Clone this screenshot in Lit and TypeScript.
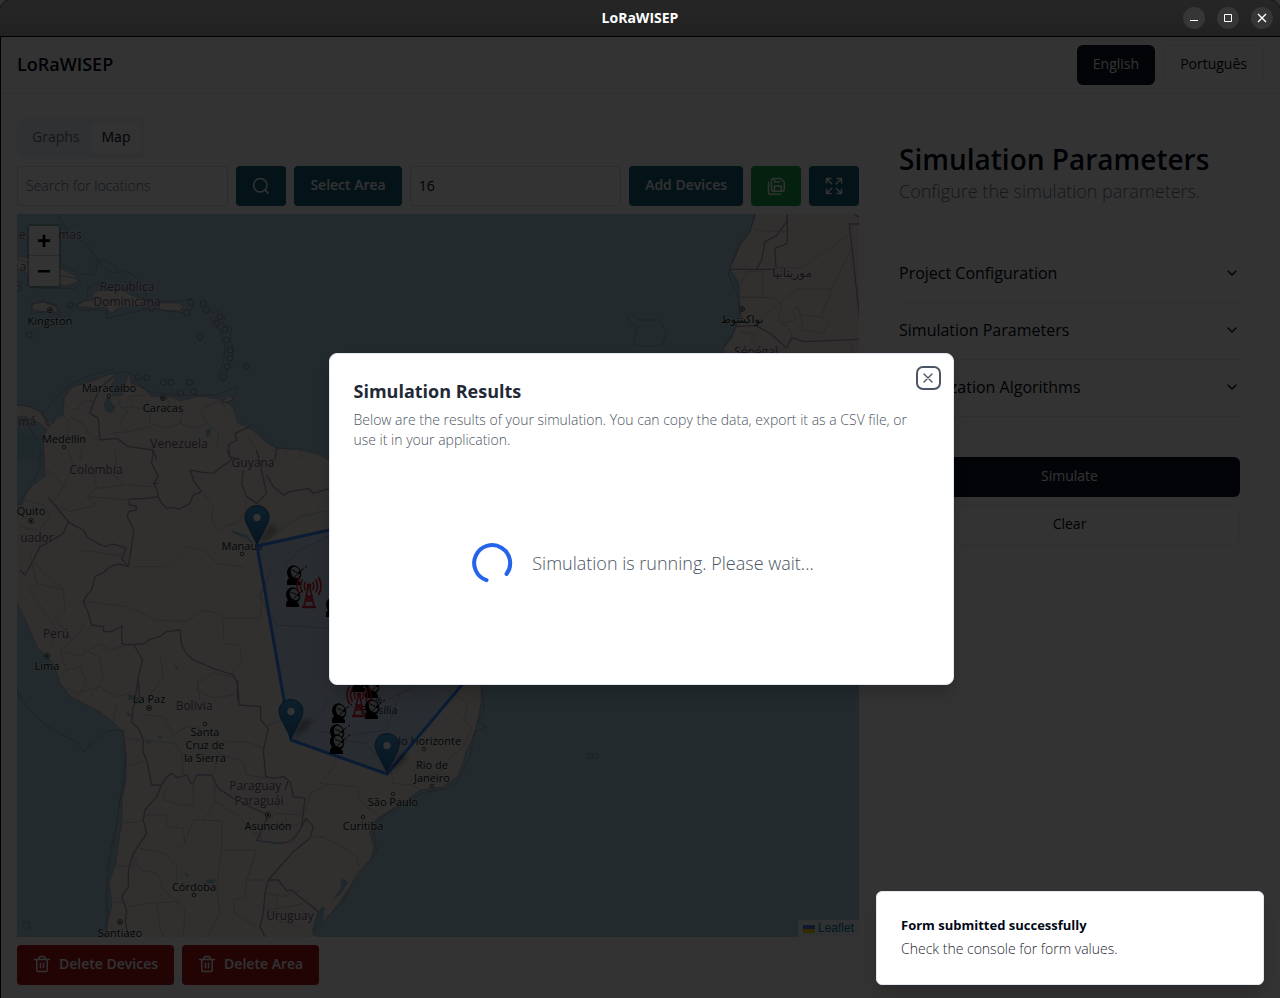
import { LitElement, html, css, svg } from "lit";
import { customElement, state } from "lit/decorators.js";

type Label = { t: string; x: number; y: number; dot?: [number, number]; capital?: boolean };

const COUNTRIES: Label[] = [
  { t: "República", x: 127, y: 291 },
  { t: "Dominicana", x: 127, y: 306 },
  { t: "Venezuela", x: 179, y: 448 },
  { t: "Colombia", x: 96, y: 474 },
  { t: "Guyana", x: 253, y: 467 },
  { t: "Perú", x: 56, y: 638 },
  { t: "Bolivia", x: 194, y: 710 },
  { t: "Paraguay /", x: 259, y: 790 },
  { t: "Paraguái", x: 259, y: 805 },
  { t: "Uruguay", x: 290, y: 920 },
  { t: "موريتانيا", x: 792, y: 277 },
  { t: "Sénégal", x: 756, y: 356 },
];

const EDGE_LABELS: Label[] = [
  { t: "e", x: 22, y: 239 },
  { t: "mas", x: 70, y: 239 },
  { t: "a", x: 23, y: 271 },
  { t: "má", x: 27, y: 426 },
  { t: "uador", x: 37, y: 542 },
];

const CITIES: Label[] = [
  { t: "Kingston", x: 50, y: 325, dot: [50, 310], capital: true },
  { t: "Maracaibo", x: 109, y: 392, dot: [109, 396] },
  { t: "Caracas", x: 163, y: 412, dot: [163, 398], capital: true },
  { t: "Medellín", x: 64, y: 443, dot: [64, 447] },
  { t: "Quito", x: 31, y: 515, dot: [31, 521], capital: true },
  { t: "Manaus", x: 242, y: 550, dot: [242, 554] },
  { t: "Lima", x: 47, y: 670, dot: [47, 656], capital: true },
  { t: "La Paz", x: 149, y: 703, dot: [149, 708], capital: true },
  { t: "Santa", x: 205, y: 736, dot: [205, 724] },
  { t: "Cruz de", x: 205, y: 749 },
  { t: "la Sierra", x: 205, y: 762 },
  { t: "Asunción", x: 268, y: 830, dot: [268, 815], capital: true },
  { t: "Córdoba", x: 194, y: 891, dot: [194, 895] },
  { t: "Santiago", x: 120, y: 937, dot: [120, 922], capital: true },
  { t: "Brasília", x: 379, y: 714, dot: [379, 700], capital: true },
  { t: "Belo Horizonte", x: 423, y: 745, dot: [424, 749] },
  { t: "Rio de", x: 432, y: 769 },
  { t: "Janeiro", x: 432, y: 782, dot: [432, 786] },
  { t: "São Paulo", x: 393, y: 806, dot: [393, 794] },
  { t: "Curitiba", x: 363, y: 830, dot: [363, 817] },
  { t: "نواكشوط", x: 742, y: 323, dot: [742, 309], capital: true },
];

const PINS: [number, number][] = [[257, 546], [291, 740], [387, 774]];
const DISHES: [number, number][] = [
  [295, 575], [294, 597], [334, 607],
  [360, 682], [373, 688], [373, 709], [340, 713], [338, 734], [338, 744],
];
const TOWERS: [number, number][] = [[309, 593], [359, 702]];

@customElement("map-view")
export class MapView extends LitElement {
  static styles = css`
    :host { display: block; position: relative; overflow: hidden; background: #aad3df; }
    .canvas { display: block; width: 100%; height: 100%; }
    .land { fill: #f2efe9; stroke: #a58fb0; stroke-width: 0.6; }
    .lake { fill: #9cc8d8; }
    .shelf { fill: none; stroke: #7fa9c0; stroke-width: 3; opacity: 0.5; }
    .sea-line { fill: none; stroke: #8f7f9f; stroke-width: 3; opacity: 0.6; }
    .border { fill: none; stroke: #b096b4; stroke-width: 4; stroke-linejoin: round; }
    .region { fill: none; stroke: #cfc6cf; stroke-width: 3; stroke-linejoin: round; }
    .island { fill: #b0cfd8; stroke: #9488a0; stroke-width: 3; }
    .label { font-family: "Open Sans", "Noto Sans", "DejaVu Sans", sans-serif; text-anchor: middle; paint-order: stroke; stroke: rgba(255, 255, 255, 0.4); stroke-width: 2px; }
    .country { font-size: 12px; fill: #7d567c; }
    .city { font-size: 11px; fill: #222; }
    .dot { fill: #f2efe9; stroke: #333; stroke-width: 0.8; }
    .core { fill: #222; }
    .area { fill: rgba(51, 136, 255, 0.2); stroke: #3388ff; stroke-width: 3; stroke-linejoin: round; }
    .zoom { position: absolute; top: 10px; left: 10px; display: flex; flex-direction: column; border: 2px solid rgba(0, 0, 0, 0.2); border-radius: 4px; background-clip: padding-box; }
    .zoom button { display: grid; place-items: center; width: 30px; height: 30px; padding: 4px 0 0; border: 0; background: #fff; color: #000; font: bold 24px/26px "Liberation Mono", monospace; cursor: pointer; }
    .zoom button:first-child { border-bottom: 1px solid #ccc; }
    .credit { position: absolute; right: 0; bottom: 0; display: flex; align-items: center; gap: 3px; padding: 0 5px; background: rgba(255, 255, 255, 0.8); color: #0078a8; font: 12px/17px "Liberation Sans", Arial, sans-serif; text-decoration: none; }
  `;

  private label(l: Label, kind: string) {
    return svg`
      ${l.dot ? svg`<circle class="dot" cx=${l.dot[0]} cy=${l.dot[1]} r=${l.capital ? 2.5 : 1.8}/>` : ""}
      ${l.dot && l.capital ? svg`<circle class="core" cx=${l.dot[0]} cy=${l.dot[1]} r="1.1"/>` : ""}
      <text class="label ${kind}" x=${l.x} y=${l.y}>${l.t}</text>`;
  }

  private pin([x, y]: [number, number]) {
    return svg`<g transform="translate(${x - 12.5} ${y - 41})">
      <path d="M13 40 L23 22 Q30 18 33 23 Q31 30 13 40Z" fill="#000" opacity=".3" filter="url(#soft)"/>
      <path d="M12.500 .6C5.900.6.6 5.900 .6 12.500c0 2.600.9 4.800 2 7L12.500 39.500 22.400 19.500c1.100-2.200 2-4.400 2-7C24.400 5.900 19.100.6 12.500.6Z" fill="url(#pin)" stroke="#2a6d9f" stroke-width="1.200"/>
      <circle cx="12.500" cy="12.500" r="4.200" fill="#fff" stroke="#2a6d9f" stroke-width=".8"/>
    </g>`;
  }

  private dish([x, y]: [number, number]) {
    return svg`<g transform="translate(${x} ${y})">
      <path d="M-8 10h13v-3q-2-3-5-3l-3-2q-5 1-5 5z" fill="#000"/>
      <ellipse cx="0" cy="-2" rx="7" ry="8" transform="rotate(-25)" fill="#000"/>
      <ellipse cx="1.500" cy="-2" rx="4.500" ry="6" transform="rotate(-25)" fill="#c5cdd6"/>
      <path d="M-3-5 3-2-1 3M4-3 12-9" fill="none" stroke="#000" stroke-width=".9" stroke-dasharray="6 1.500"/>
      <circle cx="4" cy="-2" r="1.200" fill="#000"/>
    </g>`;
  }

  private tower([x, y]: [number, number]) {
    return svg`<g transform="translate(${x} ${y})" fill="none" stroke="#d5202c" stroke-width="1.600">
      <path d="M-1-5-5 13M1-5 5 13M-3 3H3M-4 8H4M-3 3 4 8M3 3-4 8"/>
      <path d="M-7 14H7" stroke-width="2.400"/>
      <circle cx="0" cy="-7" r="1.600" fill="#d5202c"/>
      <path d="M-3.500-11q-2.500 4 0 8M3.500-11q2.500 4 0 8M-6.500-13.500q-4 6.500 0 13M6.500-13.500q4 6.500 0 13M-9.500-16q-5 9 0 18M9.500-16q5 9 0 18"/>
    </g>`;
  }

  render() {
    return html`
      <svg class="canvas" viewBox="17 214 842 723" preserveAspectRatio="xMinYMin slice" role="img" aria-label="Map">
        <defs>
          <linearGradient id="pin" x1="0" y1="0" x2="0" y2="1">
            <stop offset="0" stop-color="#3f9fdc"/><stop offset="1" stop-color="#2369a8"/>
          </linearGradient>
          <filter id="soft" x="-30%" y="-30%" width="160%" height="160%"><feGaussianBlur stdDeviation="2.500"/></filter>
        </defs>

        <path class="land" d="M10 404 28 406 40 411 48 421 53 424 56 419 63 415 64 398 72 387 86 383 100 378 113 373 115 379 110 388 113 396 122 395 125 384 129 372 131 383 147 390 150 396 173 397 180 401 200 396 218 399 226 402 234 409 238 423 253 430 267 443 277 448 300 450 320 455 345 470 372 488 400 500 440 520 480 545 510 575 512 610 500 650 481 685 481 703 477 723 472 740 466 752 463 763 457 777 443 787 420 790 407 800 387 812 373 822 370 833 374 848 371 860 360 872 350 888 335 908 320 928 314 945 103 945 108 920 112 905 109 883 116 862 118 845 122 822 122 800 126 780 126 757 123 732 113 722 100 712 70 696 60 683 53 663 37 647 27 623 17 603 10 590V505H22L26 494 33 485 45 476 44 452 43 438 47 430 38 422 28 418 10 420Z"/>
        <path class="land" d="M757 210 750 232 740 245 735 258 730 268 735 280 740 288 739 298 741 314 735 328 732 338 723 348 728 362H870V210Z"/>
        <path class="land" d="M17 256 30 258 60 268 76 276 78 282 66 286 40 281 17 268ZM76 306 84 301 94 300 92 293 98 291 110 290 124 291 138 298 153 303 150 308 134 306 118 308 111 314 106 307 92 308ZM33 304 44 302 56 307 58 312 44 312 32 309ZM159 303 178 303 184 306 180 311 160 310ZM222 401 231 395 233 400 226 403Z"/>

        <g transform="translate(0 210) scale(.3333)">
          <path class="sea-line" d="M170 10 205 65 260 105 295 150 285 195 235 190 170 155 100 60M295 150 320 150 350 175 350 190 325 185 295 155M350 190 370 180 400 195 435 235 440 270M51 145 100 165 140 190 230 205 245 220 225 235 120 235 51 215M95 280 130 275 170 285 180 315 140 305 95 310ZM225 285 260 270 265 230 290 220 330 240 400 235 420 265 460 275 540 275 575 265 582 285 560 310 450 295 320 325 320 300 240 300ZM605 275 640 310 655 300 675 320 670 345 695 355 690 390 703 420 690 455 670 517 655 505 670 460 675 410 660 360 640 335 600 290Z"/>
          <path class="sea-line" d="M51 585 90 590 130 610 180 550 215 520 260 500 330 480 350 490 380 485 400 500 440 545 540 555 650 555 710 530 700 570 660 580M51 683 130 685M135 750 105 680 80 640"/>
          <path class="shelf" d="M655 570 705 620 760 650 830 715 900 715 985 730"/>
          ${[[88, 376], [600, 381], [739, 469], [210, 285], [55, 235], [610, 280], [620, 300], [650, 340], [660, 320], [675, 360], [680, 390], [690, 420], [690, 445], [682, 470], [672, 500], [415, 500], [440, 503], [490, 517], [513, 517], [569, 517], [542, 548], [582, 545], [455, 295], [572, 278], [560, 308]].map(([x, y]) => svg`<circle class="island" cx=${x} cy=${y} r="9"/>`)}
          <path class="lake" d="M318 565 330 562 335 580 348 590 335 610 318 605 310 585ZM618 660 635 655 632 670 620 685ZM51 620 75 615 95 640 51 650ZM51 655 130 700 125 750 51 750Z"/>
          <path class="border" d="M340 500 300 535 280 580 270 610 295 625 300 690 350 685 385 710 460 720 470 750M750 650 705 670 710 690 685 705 690 740 720 750M830 715 825 750M125 612 150 650 135 640"/>
          <path class="region" d="M195 545 195 590 230 600 250 570 285 575M180 610 210 635 200 680 250 690 240 750M210 620 250 640 270 680 300 690M350 560 365 595 400 590 385 560 440 555M385 600 360 640 385 665 330 670M400 590 450 605 450 640 500 655 540 640 550 600 510 590 500 560M540 640 580 655 620 640 600 600 655 570M450 605 440 570M385 665 450 650M620 640 655 670 650 720M740 670 780 740M860 720 855 750M900 720 905 750"/>
        </g>

        <g transform="translate(0 450) scale(.3333)">
          <path class="border" d="M160 160 205 215 222 226 250 240 262 262 275 270 300 284 320 290 335 282 350 285 378 295 365 325 385 350 358 342 330 350 310 368 285 380 275 420 262 434 250 455 265 490 275 525 310 530 312 545 335 545 365 528 365 580 380 584 430 582 450 568 480 560 500 545 540 540 545 585 560 612 580 630 640 655 700 675 712 700 712 750M205 215 190 250 150 275 120 290 100 330 75 375 60 360M160 160 145 145M385 352 402 240 382 200 385 185 410 180 408 168 388 165 388 147 440 145 475 140 485 160 500 175 520 172 535 178 570 160 580 135 605 125 582 95 570 60 600 66 640 70 670 46 695 30 680 0M475 100 460 100 475 80 455 40 460 0M475 140 470 115 460 100M730 60 725 100 740 140 770 160 800 130 790 85 770 0M800 75 820 110 850 135 870 125 925 115 940 130 990 115M400 582 428 630 415 680 405 750"/>
          <path class="region" d="M130 50 165 75 190 110 160 160 210 185 290 165 260 140 290 115 380 105 455 110M205 0 220 45 190 110M330 60 370 105M345 0 350 60M260 140 390 150M605 125 640 170 635 210 660 245 680 225 710 220 740 180 735 150M255 455 380 470 470 510 560 515 610 480 655 490 670 505 780 505 785 460 780 435 800 400M670 505 672 580 720 585 725 640 695 670M595 700 640 670 700 680M595 700 600 750M820 350 780 430 795 470 830 525 985 535M240 300 310 310 380 320M385 350 500 350 560 290 610 300 650 340 730 350M90 310 110 400 85 420 130 480 170 540 150 590M110 400 190 420 195 480 165 510 220 570 180 600 200 660 170 700M100 330 140 380 190 415M220 570 255 525M250 600 300 620 310 690 270 740M180 600 240 620 300 580 330 600 380 585M200 660 240 650 260 700 220 750M480 620 490 680 440 750M60 60 80 110 110 100M75 150 130 165 150 200 120 240 120 290M60 230 110 240M280 60 290 115"/>
          <path class="sea-line" d="M120 0 120 60 75 130 60 155M51 715 60 750"/>
          <path class="shelf" d="M990 180 900 200 840 240 770 290M985 260 900 300 850 350"/>
          <path class="lake" d="M690 240 740 255 770 290 740 266 700 250ZM385 735 405 740 415 750 385 750ZM520 645 535 650 530 658Z"/>
        </g>

        <g transform="translate(0 680) scale(.3333)">
          <path class="sea-line" d="M51 30 85 85 130 130 190 165 235 190 253 215 270 195 322 152 370 150 372 175 378 230 370 320 360 360 350 430 330 520 322 580 318 660 325 700 318 770"/>
          <path class="shelf" d="M372 180 372 240 364 320 355 400 344 470 330 560 324 640 320 700 314 770M985 700 960 740 935 770"/>
          <path class="border" d="M415 0 418 50 400 80 395 125 415 145 430 180 428 215 440 240 455 315 485 315 500 290 515 280 530 292 545 290 560 285 577 315 590 285 635 285 655 325 700 355 760 385 804 405M485 315 470 350 435 390 430 420 440 460 400 520 385 570 385 620 365 650 380 690 376 725 385 770M712 0 718 75 782 80 782 120 805 145 790 210 797 290 820 295 850 290 870 305 880 350 915 355 905 440 890 465 870 485 840 490 770 482 790 440 804 405M905 440 918 415 940 440 930 475 880 515 845 555 805 600 835 600 860 632 875 630 905 655 955 695 945 730M805 600 795 640 790 700 780 740 795 770M400 110 380 100"/>
          <path class="region" d="M430 105 490 110 520 165 560 140 600 145M430 180 520 190 545 220 550 260 545 290M680 185 740 185 790 205M640 285 655 220 730 245 740 285 797 295M370 175 420 180M378 260 440 240M362 430 420 425 440 405 500 405M500 320 490 360 540 375 580 375 580 320M420 505 495 520 530 560 530 600M500 405 500 440 550 445 555 490 530 510M555 490 580 420 665 422 665 510 770 510 740 600 790 600M665 510 650 620 660 700 620 770M610 420 645 370 645 300M645 365 720 410 760 460 780 460M780 480 790 430 830 400 905 405M340 555 400 560 410 530M400 530 420 570 470 580 490 630 540 670M390 680 440 670 530 665 555 690 550 770M335 665 370 670M470 670 480 740 490 770M740 600 735 650 700 660 705 700 765 740M800 640 850 650 900 630M800 690 870 680 910 670M830 640 830 720 900 740M595 0 590 30 640 55 700 45M170 10 230 40 300 20 350 50 390 40M350 70 340 125M990 310 930 340 915 400M940 470 990 470M805 135 850 120 940 130 990 60M870 440 820 440 800 460M850 400 870 440 900 430"/>
          <path class="lake" d="M383 42 395 45 430 75 405 68ZM618 600 650 598 640 612 620 608ZM555 578 565 582 560 595ZM775 484 850 487 830 494ZM935 750 960 690 975 680 970 720 945 770ZM440 180 452 188 445 195ZM475 168 490 170 480 178Z"/>
          <circle class="sea-line" cx="79" cy="735" r="11"/>
        </g>

        <g transform="translate(320 660) scale(.3333)">
          <path class="region" d="M45 290 50 310 0 370 110 380 125 430 165 460M0 530 50 550 110 590 115 620M210 310 220 370 280 375 300 390M385 300 430 260 455 205 430 180 445 130 380 90M285 80 240 100 200 210 100 225 0 215M70 240 140 250 170 290M200 120 285 80M290 370 385 320"/>
          <path class="sea-line" d="M487 75 492 150 475 185 500 200 465 215 450 290 415 360 385 385 310 398 230 445 180 475 160 510 170 570 150 600 110 640 70 725 30 765 0 800"/>
          <circle class="sea-line" cx="811" cy="289" r="8"/><circle class="sea-line" cx="827" cy="288" r="8"/>
          <path class="lake" d="M65 655 85 665 60 705 35 720 60 690ZM0 745 15 740 5 765Z"/>
        </g>

        <g transform="translate(660 205) scale(.3333)">
          <path class="lake" d="M212 195 235 225 240 260 225 235Z"/>
          <path class="border" d="M205 193 345 193M290 192 305 165 315 110 350 92 380 50 382 27M382 115 345 130 348 190M382 115 382 27M598 57 568 57 600 350M225 365 290 362 330 385 380 430 395 398 430 410 600 403M570 15 600 40"/>
          <path class="region" d="M345 188 425 188 568 88M285 75 350 80 380 78M260 200 308 198 308 277 235 277 340 278 365 300 355 345 385 370 400 400M260 200 240 240M310 335 410 252 515 252 574 130M515 252 482 337 508 350 490 385 430 375 420 330 415 305 400 315 405 345 365 355M482 337 420 330M240 380 290 390 270 410 300 430M570 403 580 450M350 440 390 425"/>
          <path class="sea-line" d="M285 27 268 85 240 115 212 180 205 210 232 265 240 320 222 380 190 430M-85 325 -60 345 0 345 20 385 5 420 -40 425 -80 420 -68 365 -92 355 -98 335Z"/>
        </g>

        ${EDGE_LABELS.map((l) => this.label(l, "country"))}
        ${COUNTRIES.map((l) => this.label(l, "country"))}
        ${CITIES.map((l) => this.label(l, "city"))}

        <path class="area" d="M257 546 520 488 540 592 387 774 291 740Z"/>
        ${DISHES.map((p) => this.dish(p))}
        ${TOWERS.map((p) => this.tower(p))}
        ${PINS.map((p) => this.pin(p))}
      </svg>
      <div class="zoom">
        <button aria-label="Zoom in">+</button>
        <button aria-label="Zoom out">−</button>
      </div>
      <a class="credit" href="#leaflet">
        <svg width="12" height="8" viewBox="0 0 12 8" aria-hidden="true"><path fill="#4c7be1" d="M0 0h12v4H0z"/><path fill="#ffd500" d="M0 4h12v4H0z"/></svg>
        Leaflet
      </a>
    `;
  }
}

@customElement("app-root")
export class AppRoot extends LitElement {
  static styles = css`
    :host { display: flex; flex-direction: column; min-height: 100vh; background: #333; color: #020817; font: 14px/20px "Open Sans", "Noto Sans", sans-serif; }
    * { box-sizing: border-box; }
    h1, h2, p { margin: 0; }
    button, input { font: inherit; color: inherit; }
    button { cursor: pointer; }
    .ico { fill: none; stroke: currentColor; stroke-width: 2; stroke-linecap: round; stroke-linejoin: round; flex: none; }

    .titlebar { display: grid; grid-template-columns: 1fr auto 1fr; align-items: center; height: 37px; padding: 0 7px; border-bottom: 1px solid #000; border-radius: 12px 12px 0 0; background: linear-gradient(#262626, #212121); color: #fff; font-weight: 700; box-shadow: 0 0 0 1px #111; }
    .title { grid-column: 2; }
    .winbtns { display: flex; gap: 12px; justify-content: flex-end; }
    .winbtns button { display: grid; place-items: center; width: 22px; height: 22px; padding: 0; border: 0; border-radius: 50%; background: #363636; color: #fff; }

    .window { position: relative; flex: 1; display: flex; flex-direction: column; border-left: 1px solid #000; background: #fff; }
    .header { display: flex; align-items: center; justify-content: space-between; padding: 8px 16px; border-bottom: 1px solid #e2e8f0; }
    .brand { padding-bottom: 2px; font-size: 18px; line-height: 28px; font-weight: 600; }
    .langs { display: flex; gap: 8px; }

    .btn { display: inline-flex; align-items: center; justify-content: center; gap: 8px; height: 40px; padding: 0 16px 2px; border: 0; border-radius: 4px; color: #f8fafc; font-weight: 600; white-space: nowrap; }
    .dark { background: #0f172a; font-weight: 400; border-radius: 6px; }
    .outline { background: #fff; color: #020817; border: 1px solid #e9edf3; font-weight: 400; border-radius: 6px; }
    .teal { background: #155e75; }
    .green { background: #16a34a; }
    .red { background: #a8181c; }
    .square { padding: 0 16px; }

    .main { flex: 1; display: grid; grid-template-columns: 2fr 1fr; padding: 24px 0 13px 16px; }
    .left { display: flex; flex-direction: column; gap: 8px; min-width: 0; }
    .tabs { display: flex; align-self: flex-start; padding: 4px; border-radius: 6px; background: #f1f5f9; color: #64748b; }
    .tabs button { padding: 5px 11px 7px; border: 0; border-radius: 4px; background: none; }
    .tabs .on { background: #fff; color: #020817; font-weight: 500; box-shadow: 0 1px 2px rgba(0, 0, 0, 0.05); }
    .tools { display: flex; gap: 8px; }
    .tools label { display: flex; flex: 1 1 0; min-width: 0; }
    .field { width: 100%; height: 40px; padding: 0 8px 2px; border: 1px solid #d5d9e0; border-radius: 4px; background: #fff; }
    .field::placeholder { color: #64748b; font-weight: 300; opacity: 1; }
    .map { flex: 1; min-height: 320px; }
    .actions { display: flex; gap: 8px; }

    .right { display: flex; flex-direction: column; gap: 40px; padding: 24px 40px; }
    .right h1 { padding-bottom: 2px; font-size: 28px; line-height: 34px; font-weight: 600; }
    .sub { padding-bottom: 2px; color: #64748b; font-size: 18px; line-height: 26px; font-weight: 300; }
    .fold { display: flex; align-items: center; justify-content: space-between; width: 100%; height: 57px; padding: 0 0 2px; border: 0; border-bottom: 1px solid #e2e8f0; background: none; font-size: 16px; font-weight: 500; text-align: left; }
    .submit { display: flex; flex-direction: column; gap: 8px; }

    .scrim { position: absolute; inset: 0; display: grid; place-items: center; padding: 3px 16px 0 17px; background: rgba(0, 0, 0, 0.8); }
    .dialog { position: relative; display: flex; flex-direction: column; gap: 16px; width: 100%; max-width: 625px; padding: 24px; border: 1px solid #e2e8f0; border-radius: 8px; background: #fff; box-shadow: 0 10px 15px -3px rgba(0, 0, 0, 0.2); }
    .heading { display: flex; flex-direction: column; gap: 6px; padding-bottom: 2px; }
    .heading h2 { color: #1f2937; font-size: 18px; line-height: 26px; font-weight: 700; }
    .heading p { color: #4b5563; font-weight: 300; }
    .close { position: absolute; top: 12px; right: 12px; display: grid; place-items: center; width: 25px; height: 24px; padding: 0; border: 2px solid #4b5563; border-radius: 7px; background: #fff; color: #4b5563; }
    .wait { display: flex; align-items: center; justify-content: center; gap: 16px; height: 192px; padding-bottom: 2px; color: #4b5563; font-size: 18px; line-height: 28px; font-weight: 300; }
    .spin { fill: none; stroke: #2563eb; stroke-width: 4; stroke-linecap: round; }

    .toast { position: absolute; right: 16px; bottom: 13px; display: flex; flex-direction: column; gap: 4px; width: 388px; max-width: calc(100% - 32px); padding: 23px 24px 25px; border: 1px solid #e2e8f0; border-radius: 6px; background: #fff; box-shadow: 0 10px 15px -3px rgba(0, 0, 0, 0.2); }
    .toast strong { font-size: 13px; font-weight: 700; }
    .toast span { font-weight: 300; color: #1e2534; }
  `;

  @state() private tab = "Map";

  private trash = html`<svg class="ico" width="18" height="18" viewBox="0 0 24 24" aria-hidden="true"><path d="M2 6h20M19 6v14a2 2 0 0 1-2 2H7a2 2 0 0 1-2-2V6M8 6V4a2 2 0 0 1 2-2h4a2 2 0 0 1 2 2v2M10 11v6M14 11v6"/></svg>`;
  private chevron = html`<svg class="ico" width="16" height="16" viewBox="0 0 24 24" aria-hidden="true"><path d="m6 9 6 6 6-6"/></svg>`;

  render() {
    return html`
      <div class="titlebar">
        <span class="title">LoRaWISEP</span>
        <div class="winbtns">
          <button aria-label="Minimize"><svg width="10" height="10" viewBox="0 0 10 10"><path d="M1 7h8v1H1z" fill="#fff"/></svg></button>
          <button aria-label="Maximize"><svg width="10" height="10" viewBox="0 0 10 10"><path d="M1.500 1.500h7v7h-7z" fill="none" stroke="#fff"/></svg></button>
          <button aria-label="Close window"><svg width="10" height="10" viewBox="0 0 10 10"><path d="m1 1 8 8M9 1 1 9" stroke="#fff" stroke-width="1.400"/></svg></button>
        </div>
      </div>

      <div class="window">
        <header class="header">
          <span class="brand">LoRaWISEP</span>
          <div class="langs">
            <button class="btn dark">English</button>
            <button class="btn outline">Português</button>
          </div>
        </header>

        <main class="main">
          <section class="left">
            <div class="tabs" role="tablist">
              ${["Graphs", "Map"].map((t) => html`<button role="tab" class=${this.tab === t ? "on" : ""} aria-selected=${this.tab === t} @click=${() => (this.tab = t)}>${t}</button>`)}
            </div>
            <div class="tools">
              <label><input class="field" type="text" placeholder="Search for locations" aria-label="Search for locations" /></label>
              <button class="btn teal square" aria-label="Search"><svg class="ico" width="18" height="18" viewBox="0 0 24 24"><circle cx="11" cy="11" r="9"/><path d="m21.500 21.500-4-4"/></svg></button>
              <button class="btn teal">Select Area</button>
              <label><input class="field" type="text" value="16" aria-label="Number of devices" /></label>
              <button class="btn teal">Add Devices</button>
              <button class="btn green square" aria-label="Save"><svg class="ico" width="18" height="18" viewBox="0 0 24 24"><path d="M6 4a2 2 0 0 1 2-2h10l5 5v10a2 2 0 0 1-2 2H8a2 2 0 0 1-2-2zM10 2v4.500h7M10 19v-7h9v7M18 23H4a2 2 0 0 1-2-2V7"/></svg></button>
              <button class="btn teal square" aria-label="Expand"><svg class="ico" width="18" height="18" viewBox="0 0 24 24"><path d="M2 8V2h6M2 2l7 7M16 2h6v6M22 2l-7 7M22 16v6h-6M22 22l-7-7M8 22H2v-6M2 22l7-7"/></svg></button>
            </div>
            <map-view class="map"></map-view>
            <div class="actions">
              <button class="btn red">${this.trash}Delete Devices</button>
              <button class="btn red">${this.trash}Delete Area</button>
            </div>
          </section>

          <section class="right">
            <div>
              <h1>Simulation Parameters</h1>
              <p class="sub">Configure the simulation parameters.</p>
            </div>
            <div>
              ${["Project Configuration", "Simulation Parameters", "Optimization Algorithms"].map((t) => html`<button class="fold" aria-expanded="false">${t}${this.chevron}</button>`)}
            </div>
            <div class="submit">
              <button class="btn dark">Simulate</button>
              <button class="btn outline">Clear</button>
            </div>
          </section>
        </main>

        <div class="scrim">
          <div class="dialog" role="dialog" aria-modal="true" aria-labelledby="dlg-title">
            <div class="heading">
              <h2 id="dlg-title">Simulation Results</h2>
              <p>Below are the results of your simulation. You can copy the data, export it as a CSV file, or use it in your application.</p>
            </div>
            <div class="wait">
              <svg class="spin" width="48" height="48" viewBox="0 0 48 48" aria-hidden="true"><path d="M18.500 41.200A18 18 0 1 1 38.500 35"/></svg>
              <span>Simulation is running. Please wait...</span>
            </div>
            <button class="close" aria-label="Close"><svg class="ico" width="16" height="16" viewBox="0 0 24 24"><path d="M18 6 6 18M6 6l12 12"/></svg></button>
          </div>
        </div>

        <div class="toast" role="status">
          <strong>Form submitted successfully</strong>
          <span>Check the console for form values.</span>
        </div>
      </div>
    `;
  }
}
